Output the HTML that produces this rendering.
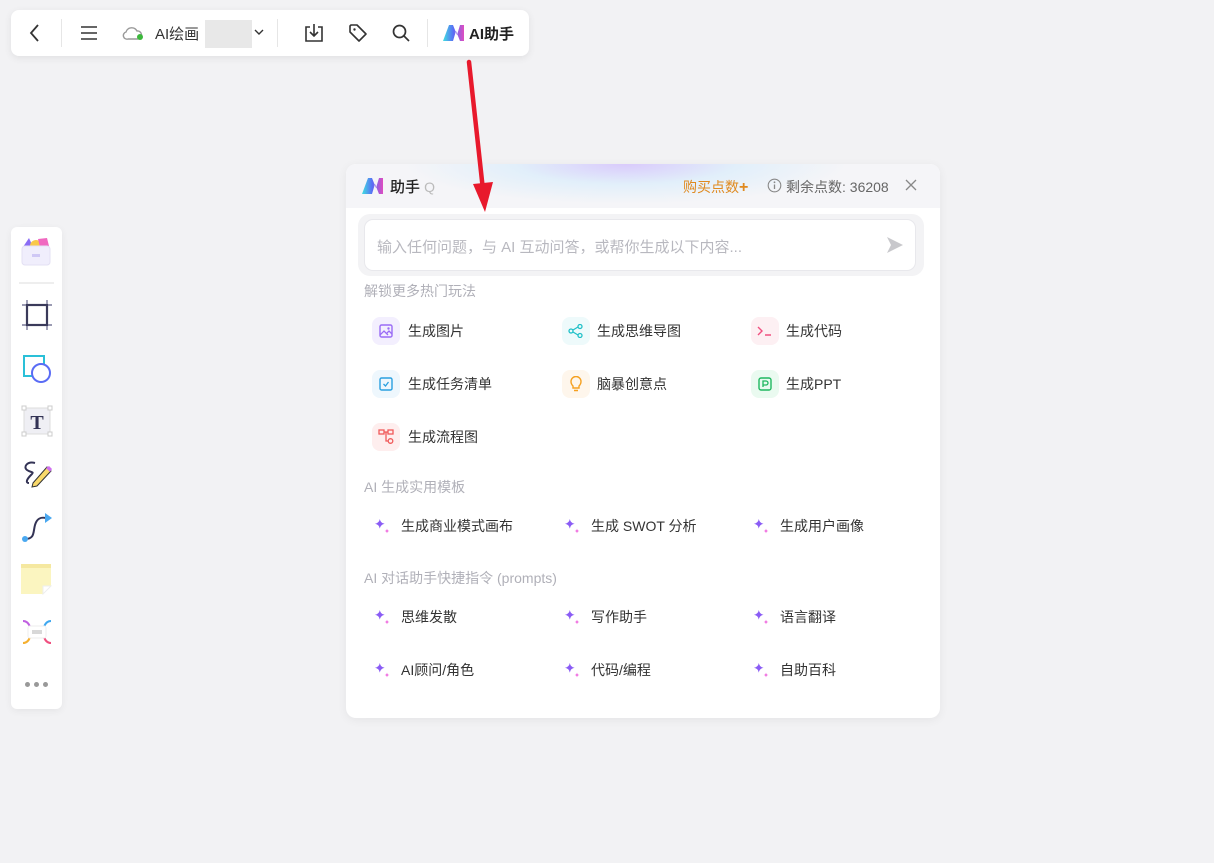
<!DOCTYPE html>
<html><head><meta charset="utf-8"><style>
*{box-sizing:border-box;margin:0;padding:0}
body{width:1214px;height:863px;background:#f2f2f4;font-family:"Liberation Sans","Noto Sans CJK SC",sans-serif;position:relative;overflow:hidden;color:#333}
.abs{position:absolute}
.bar{left:11px;top:10px;width:518px;height:46px;background:#fff;border-radius:8px;box-shadow:0 2px 8px rgba(0,0,0,.08)}
.sep{position:absolute;top:9px;width:1px;height:28px;background:#e6e6e6}
.side{left:11px;top:227px;width:51px;height:482px;background:#fff;border-radius:6px;box-shadow:0 2px 8px rgba(0,0,0,.06)}
.panel{left:346px;top:164px;width:594px;height:554px;background:#fff;border-radius:10px;box-shadow:0 2px 10px rgba(0,0,0,.06);overflow:hidden}
.hdr{position:absolute;left:0;top:0;width:594px;height:44px;background:#f5f5f8;overflow:hidden}
.glow{position:absolute;left:60px;top:-40px;width:440px;height:80px;background:radial-gradient(closest-side,rgba(190,160,255,.5),rgba(180,225,255,.3) 50%,rgba(245,245,248,0) 100%)}
.inp{position:absolute;left:12px;top:50px;width:566px;height:62px;background:#f3f3f5;border-radius:12px}
.inp2{position:absolute;left:6px;top:5px;width:552px;height:52px;background:#fff;border:1px solid #e8e8ec;border-radius:9px;font-size:15px;color:#b8b8bf;padding:16px 12px}
.lbl{position:absolute;left:18px;font-size:14px;color:#b0b0b8}
.it{position:absolute;font-size:14px;color:#333;line-height:20px}
.ib{position:absolute;width:28px;height:28px;border-radius:8px}
</style></head><body>
<div class="abs bar">
 <svg class="abs" style="left:16px;top:13px" width="16" height="20" viewBox="0 0 16 20"><path d="M11 2 L4 10 L11 18" fill="none" stroke="#333" stroke-width="1.8"/></svg>
 <div class="sep" style="left:50px"></div>
 <svg class="abs" style="left:68px;top:14px" width="20" height="18" viewBox="0 0 20 18"><path d="M2 3h16M2 9h16M2 15h16" stroke="#333" stroke-width="1.6"/></svg>
 <svg class="abs" style="left:111px;top:14px" width="24" height="18" viewBox="0 0 24 18"><path d="M6 15 H16 A4 4 0 0 0 15 7 A6 6 0 0 0 4 8 A3.5 3.5 0 0 0 6 15Z" fill="none" stroke="#999" stroke-width="1.4"/><circle cx="18" cy="13" r="3" fill="#3cb83c"/></svg>
 <div class="abs" style="left:144px;top:13px;font-size:15px;color:#333">AI绘画</div>
 <div class="abs" style="left:194px;top:10px;width:47px;height:28px;background:#e8e8e8"></div>
 <svg class="abs" style="left:243px;top:18px" width="10" height="8" viewBox="0 0 10 8"><path d="M1 2 L5 6 L9 2" fill="none" stroke="#333" stroke-width="1.4"/></svg>
 <div class="sep" style="left:266px"></div>
 <svg class="abs" style="left:292px;top:12px" width="22" height="22" viewBox="0 0 22 22"><path d="M7 5H3v14h16V5h-4M11 2v12M7 10l4 4 4-4" fill="none" stroke="#333" stroke-width="1.6"/></svg>
 <svg class="abs" style="left:337px;top:13px" width="20" height="20" viewBox="0 0 20 20"><path d="M2 3 V9 L11 18 L18 11 L9 2 H3Z" fill="none" stroke="#333" stroke-width="1.6" stroke-linejoin="round"/><circle cx="6.5" cy="6.5" r="1.2" fill="#333"/></svg>
 <svg class="abs" style="left:380px;top:13px" width="20" height="20" viewBox="0 0 20 20"><circle cx="8.5" cy="8.5" r="6" fill="none" stroke="#333" stroke-width="1.7"/><path d="M13 13l5 5" stroke="#333" stroke-width="1.7"/></svg>
 <div class="sep" style="left:416px"></div>
 <svg class="abs" style="left:432px;top:15px" width="22" height="16" viewBox="0 0 22 16"><defs><linearGradient id="g1" x1="0" x2="1"><stop offset="0" stop-color="#3fe0e0"/><stop offset=".5" stop-color="#5a6cf5"/><stop offset="1" stop-color="#e04cc0"/></linearGradient></defs><path d="M0 16 L6 0 H10 L14 10 L17 0 H21 V16 H17 L13 6 L10 16Z" fill="url(#g1)"/></svg>
 <div class="abs" style="left:458px;top:13px;font-size:15px;color:#222;font-weight:bold">AI助手</div>
</div>

<div class="abs side">
 <svg class="abs" style="left:9px;top:8px" width="32" height="32" viewBox="0 0 32 32"><path d="M3 12 L9 3 L13 12Z" fill="#8a6cf5"/><circle cx="16" cy="11" r="6" fill="#f9c84a"/><path d="M18 4 L27 3 L29 11 L20 12Z" fill="#f068c0"/><rect x="2" y="11" width="28" height="19" rx="3" fill="#f0eefc" stroke="#e3e0f3"/><rect x="12" y="19" width="8" height="3" fill="#cfc8f5"/></svg>
 <div class="abs" style="left:8px;top:55px;width:35px;height:2px;background:#eee"></div>
 <svg class="abs" style="left:11px;top:73px" width="30" height="30" viewBox="0 0 30 30"><rect x="5" y="5" width="20" height="20" fill="none" stroke="#3a3a5a" stroke-width="2.2"/><path d="M5 0v4M25 0v4M5 26v4M25 26v4M0 5h4M0 25h4M26 5h4M26 25h4" stroke="#7a7a9a" stroke-width="1.4"/></svg>
 <svg class="abs" style="left:11px;top:127px" width="30" height="30" viewBox="0 0 30 30"><rect x="2" y="2" width="20" height="20" fill="#fff" stroke="#2ac0d8" stroke-width="2"/><circle cx="19" cy="19" r="9" fill="#fff" stroke="#5a6cf5" stroke-width="2"/></svg>
 <svg class="abs" style="left:10px;top:178px" width="32" height="32" viewBox="0 0 32 32"><rect x="3" y="3" width="26" height="26" fill="#efeff4" stroke="#ddd"/><rect x="1" y="1" width="4" height="4" fill="#fff" stroke="#ccc"/><rect x="27" y="1" width="4" height="4" fill="#fff" stroke="#ccc"/><rect x="1" y="27" width="4" height="4" fill="#fff" stroke="#ccc"/><rect x="27" y="27" width="4" height="4" fill="#fff" stroke="#ccc"/><text x="16" y="24" font-size="20" font-family="Liberation Serif" font-weight="bold" text-anchor="middle" fill="#333355">T</text></svg>
 <svg class="abs" style="left:10px;top:232px" width="32" height="30" viewBox="0 0 32 30"><path d="M14 4 C6 2 2 8 6 11 C10 14 14 12 10 16 C6 20 4 24 8 24" fill="none" stroke="#333355" stroke-width="2"/><path d="M12 24 L26 8 L30 12 L16 27 L11 28Z" fill="#f9d96a" stroke="#333" stroke-width="1"/><path d="M25 9 L29 13 L31 10 L28 7Z" fill="#d070f0"/></svg>
 <svg class="abs" style="left:10px;top:285px" width="32" height="32" viewBox="0 0 32 32"><path d="M4 27 C14 27 12 20 14 13 C16 6 20 5 25 6" fill="none" stroke="#333355" stroke-width="2"/><circle cx="4" cy="27" r="3" fill="#4aa8f0"/><path d="M24 1 L31 6 L24 11Z" fill="#4aa8f0"/></svg>
 <svg class="abs" style="left:10px;top:337px" width="31" height="31" viewBox="0 0 31 31"><path d="M0 2 H30 V22 L22 30 H0Z" fill="#fbf5c0"/><rect x="0" y="0" width="30" height="4" fill="#f5e8a0"/><path d="M22 30 L22 22 H30Z" fill="#fff" stroke="#eee"/></svg>
 <svg class="abs" style="left:10px;top:392px" width="32" height="26" viewBox="0 0 32 26"><path d="M2 2 C6 2 8 5 9 8" fill="none" stroke="#c060e0" stroke-width="2"/><path d="M30 2 C26 2 24 5 23 8" fill="none" stroke="#40a8f0" stroke-width="2"/><path d="M2 24 C6 24 8 21 9 18" fill="none" stroke="#f5b030" stroke-width="2"/><path d="M30 24 C26 24 24 21 23 18" fill="none" stroke="#f05080" stroke-width="2"/><rect x="7" y="7" width="18" height="12" rx="2" fill="#fff" stroke="#eee"/><rect x="11" y="11" width="10" height="4" fill="#d8d8d8"/></svg>
 <div class="abs" style="left:14px;top:455px;font-size:0">
  <span style="display:inline-block;width:5px;height:5px;border-radius:50%;background:#999;margin-right:4px"></span><span style="display:inline-block;width:5px;height:5px;border-radius:50%;background:#999;margin-right:4px"></span><span style="display:inline-block;width:5px;height:5px;border-radius:50%;background:#999"></span>
 </div>
</div>

<div class="abs panel">
 <div class="hdr"><div class="glow"></div></div>
 <svg class="abs" style="left:16px;top:14px" width="22" height="16" viewBox="0 0 22 16"><defs><linearGradient id="g2" x1="0" x2="1"><stop offset="0" stop-color="#3fe0e0"/><stop offset=".5" stop-color="#5a6cf5"/><stop offset="1" stop-color="#e04cc0"/></linearGradient></defs><path d="M0 16 L6 0 H10 L14 10 L17 0 H21 V16 H17 L13 6 L10 16Z" fill="url(#g2)"/></svg>
 <div class="abs" style="left:44px;top:12px;font-size:15px;color:#222;font-weight:500">助手 <span style="color:#bbb;font-size:14px;font-weight:normal">Q</span></div>
 <div class="abs" style="left:337px;top:13px;font-size:14px;color:#e08a20">购买点数<b style="font-size:16px">+</b></div>
 <svg class="abs" style="left:421px;top:14px" width="15" height="15" viewBox="0 0 15 15"><circle cx="7.5" cy="7.5" r="6.3" fill="none" stroke="#888" stroke-width="1.1"/><path d="M7.5 6.5v4.5" stroke="#888" stroke-width="1.3"/><circle cx="7.5" cy="4.3" r=".9" fill="#888"/></svg>
 <div class="abs" style="left:440px;top:13px;font-size:14px;color:#666">剩余点数: 36208</div>
 <svg class="abs" style="left:559px;top:15px" width="12" height="12" viewBox="0 0 12 12"><path d="M1 1l10 10M11 1L1 11" stroke="#888" stroke-width="1.3"/></svg>
 <div class="inp"><div class="inp2">输入任何问题，与 AI 互动问答，或帮你生成以下内容...</div>
  <svg class="abs" style="left:528px;top:22px" width="18" height="18" viewBox="0 0 18 18"><path d="M1 1 L17 9 L1 17 L5 9Z" fill="#c8c8cc"/></svg></div>
 <div class="lbl" style="top:117px">解锁更多热门玩法</div>

 <div class="ib" style="left:26px;top:153px;background:#f3effe"></div><svg class="abs" style="left:33px;top:160px" width="14" height="14" viewBox="0 0 14 14"><rect x="1" y="1" width="12" height="12" rx="1.5" fill="none" stroke="#9a6cf5" stroke-width="1.4"/><path d="M1 11 L5 7 L9 11 M8 9 L10 7 L13 10" fill="none" stroke="#9a6cf5" stroke-width="1.3"/><circle cx="9.5" cy="4.5" r="1.2" fill="#9a6cf5"/></svg>
 <div class="it" style="left:62px;top:157px">生成图片</div>
 <div class="ib" style="left:216px;top:153px;background:#eefafb"></div><svg class="abs" style="left:222px;top:160px" width="16" height="14" viewBox="0 0 16 14"><circle cx="3" cy="7" r="2" fill="none" stroke="#20c0c8" stroke-width="1.3"/><circle cx="12" cy="2.5" r="2" fill="none" stroke="#20c0c8" stroke-width="1.3"/><circle cx="12" cy="11.5" r="2" fill="none" stroke="#20c0c8" stroke-width="1.3"/><path d="M5 6 L10 3 M5 8 L10 11" stroke="#20c0c8" stroke-width="1.3"/></svg>
 <div class="it" style="left:251px;top:157px">生成思维导图</div>
 <div class="ib" style="left:405px;top:153px;background:#fdf0f3"></div><svg class="abs" style="left:411px;top:161px" width="16" height="12" viewBox="0 0 16 12"><path d="M1 2 L5 6 L1 10 M8 10 H14" fill="none" stroke="#f05080" stroke-width="1.4"/></svg>
 <div class="it" style="left:440px;top:157px">生成代码</div>

 <div class="ib" style="left:26px;top:206px;background:#eef7fd"></div><svg class="abs" style="left:33px;top:213px" width="14" height="14" viewBox="0 0 14 14"><rect x="1" y="1" width="12" height="12" rx="1.5" fill="none" stroke="#2aa0e0" stroke-width="1.4"/><path d="M4.5 7 L6.5 9 L9.5 5" fill="none" stroke="#2aa0e0" stroke-width="1.3"/></svg>
 <div class="it" style="left:62px;top:210px">生成任务清单</div>
 <div class="ib" style="left:216px;top:206px;background:#fef6ec"></div><svg class="abs" style="left:223px;top:212px" width="14" height="16" viewBox="0 0 14 16"><path d="M4 10 C2 8 2 6 2 5.5 A5 5 0 0 1 12 5.5 C12 6 12 8 10 10 V12 H4Z M5 14.5 H9" fill="none" stroke="#f5a020" stroke-width="1.4"/></svg>
 <div class="it" style="left:251px;top:210px">脑暴创意点</div>
 <div class="ib" style="left:405px;top:206px;background:#eafaf0"></div><svg class="abs" style="left:412px;top:213px" width="14" height="14" viewBox="0 0 14 14"><rect x="1" y="1" width="12" height="12" rx="2" fill="none" stroke="#20b860" stroke-width="1.4"/><path d="M5 10 V4 H8 A2 2 0 0 1 8 8 H5" fill="none" stroke="#20b860" stroke-width="1.3"/></svg>
 <div class="it" style="left:440px;top:210px">生成PPT</div>

 <div class="ib" style="left:26px;top:259px;background:#feeeee"></div><svg class="abs" style="left:32px;top:265px" width="16" height="16" viewBox="0 0 16 16"><rect x="1" y="1" width="5" height="4" fill="none" stroke="#f05a5a" stroke-width="1.3"/><rect x="10" y="1" width="5" height="4" fill="none" stroke="#f05a5a" stroke-width="1.3"/><circle cx="12.5" cy="12" r="2.3" fill="none" stroke="#f05a5a" stroke-width="1.3"/><path d="M6 3 H10 M8 3 V12 H10" fill="none" stroke="#f05a5a" stroke-width="1.3"/></svg>
 <div class="it" style="left:62px;top:263px">生成流程图</div>

 <div class="lbl" style="top:313px">AI 生成实用模板</div>
 <div class="lbl" style="top:404px">AI 对话助手快捷指令 (prompts)</div>
</div>

<svg class="abs" style="left:0;top:0;pointer-events:none" width="1214" height="863">
 <defs><g id="sp" transform="scale(1.2)"><path d="M4 0 Q4.6 3.4 8 4 Q4.6 4.6 4 8 Q3.4 4.6 0 4 Q3.4 3.4 4 0Z" fill="#8a5cf5"/><path d="M10 8 Q10.3 9.7 12 10 Q10.3 10.3 10 12 Q9.7 10.3 8 10 Q9.7 9.7 10 8Z" fill="#f070e0"/></g></defs>
 <use href="#sp" x="375" y="519"/><use href="#sp" x="565" y="519"/><use href="#sp" x="754" y="519"/>
 <use href="#sp" x="375" y="610"/><use href="#sp" x="565" y="610"/><use href="#sp" x="754" y="610"/>
 <use href="#sp" x="375" y="663"/><use href="#sp" x="565" y="663"/><use href="#sp" x="754" y="663"/>
 <path d="M469 62 L483 190" stroke="#e8192c" stroke-width="4.5" stroke-linecap="round"/>
 <path d="M473 184 L493 182 L485 212Z" fill="#e8192c"/>
</svg>
<div class="it" style="left:401px;top:516px">生成商业模式画布</div>
<div class="it" style="left:591px;top:516px">生成 SWOT 分析</div>
<div class="it" style="left:780px;top:516px">生成用户画像</div>
<div class="it" style="left:401px;top:607px">思维发散</div>
<div class="it" style="left:591px;top:607px">写作助手</div>
<div class="it" style="left:780px;top:607px">语言翻译</div>
<div class="it" style="left:401px;top:660px">AI顾问/角色</div>
<div class="it" style="left:591px;top:660px">代码/编程</div>
<div class="it" style="left:780px;top:660px">自助百科</div>
</body></html>
